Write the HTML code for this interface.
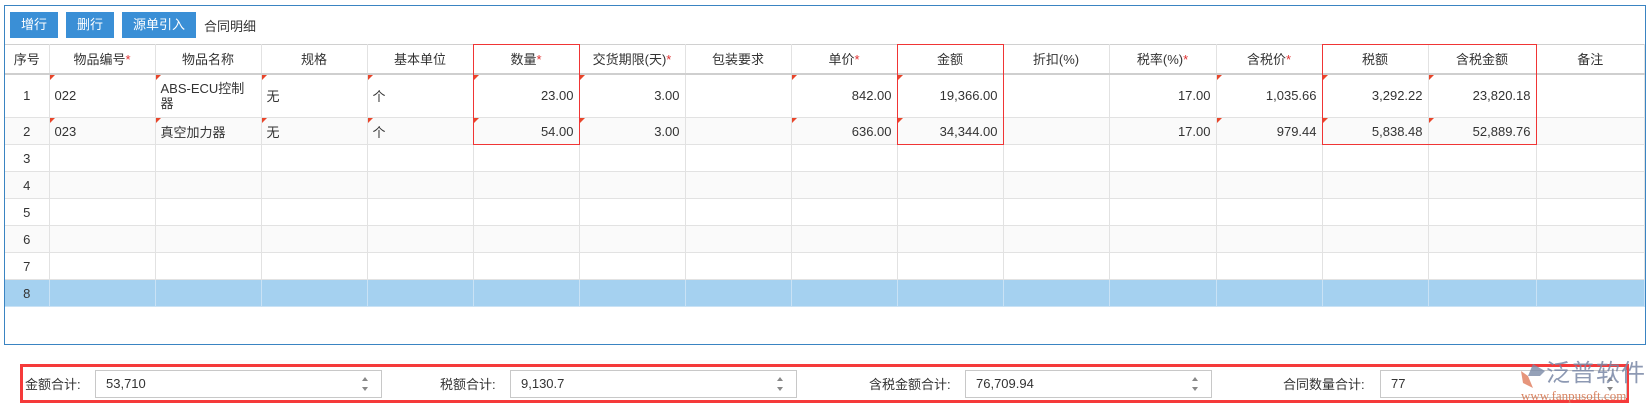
<!DOCTYPE html>
<html><head><meta charset="utf-8"><style>
*{margin:0;padding:0;box-sizing:border-box}
body{width:1649px;height:406px;background:#fff;font-family:"Liberation Sans","Noto Sans CJK SC",sans-serif;font-size:13px;color:#333;position:relative;overflow:hidden}
.panel{position:absolute;left:4px;top:5px;width:1642px;height:340px;border:1px solid #3a84c2}
.btn{position:absolute;top:12px;height:26px;background:#3a8fd6;color:#fff;font-size:13px;line-height:26px;text-align:center}
table{position:absolute;left:5px;top:44px;border-collapse:collapse;table-layout:fixed;width:1640px}
td{border:1px solid #e2e2e2;height:27px;padding:0 5px;white-space:nowrap;position:relative;overflow:visible}
tr.h td{border-top:1px solid #d0d0d0;border-bottom:2px solid #cfcfcf;text-align:center;height:29px}
td:first-child{text-align:center;border-left:none}
td.r{text-align:right}
tr.alt td{background:#fafafa}
tr.sel td{background:#a5d1f0;border-color:#c9e2f5}
.s{color:#e03030}
.t:before{content:"";position:absolute;left:0;top:0;border-top:5px solid #e8452a;border-right:5px solid transparent}
.rb{position:absolute;border:1px solid #f03535}
.foot{position:absolute;left:20px;top:364px;width:1609px;height:39px;border:3px solid #f53a3a}
.lab{position:absolute;top:374px;font-size:13px}
.inp{position:absolute;top:370px;height:28px;border:1px solid #c8c8c8;background:#fff;padding-left:10px;line-height:26px;font-size:13px}
.sp{position:absolute;right:12px;top:6px;width:7px;height:14px}
.sp:before{content:"";position:absolute;top:0;left:0;border-bottom:4px solid #888;border-left:3.5px solid transparent;border-right:3.5px solid transparent}
.sp:after{content:"";position:absolute;bottom:0;left:0;border-top:4px solid #888;border-left:3.5px solid transparent;border-right:3.5px solid transparent}
</style></head><body>
<div class="panel"></div>
<div class="btn" style="left:10px;width:48px">增行</div>
<div class="btn" style="left:66px;width:48px">删行</div>
<div class="btn" style="left:122px;width:74px">源单引入</div>
<div style="position:absolute;left:204px;top:16px">合同明细</div>
<table>
<colgroup><col style="width:44px"><col style="width:106px"><col style="width:106px"><col style="width:106px"><col style="width:106px"><col style="width:106px"><col style="width:106px"><col style="width:106px"><col style="width:106px"><col style="width:106px"><col style="width:106px"><col style="width:107px"><col style="width:106px"><col style="width:106px"><col style="width:108px"><col></colgroup>
<tr class="h"><td>序号</td><td>物品编号<span class="s">*</span></td><td>物品名称</td><td>规格</td><td>基本单位</td><td>数量<span class="s">*</span></td><td>交货期限(天)<span class="s">*</span></td><td>包装要求</td><td>单价<span class="s">*</span></td><td>金额</td><td>折扣(%)</td><td>税率(%)<span class="s">*</span></td><td>含税价<span class="s">*</span></td><td>税额</td><td>含税金额</td><td>备注</td></tr>
<tr><td style="height:44px">1</td><td class="t">022</td><td class="t" style="white-space:normal;line-height:15px">ABS-ECU控制器</td><td class="t">无</td><td class="t">个</td><td class="t r">23.00</td><td class="t r">3.00</td><td></td><td class="t r">842.00</td><td class="t r">19,366.00</td><td></td><td class="r">17.00</td><td class="t r">1,035.66</td><td class="t r">3,292.22</td><td class="t r">23,820.18</td><td></td></tr>
<tr class="alt"><td>2</td><td class="t">023</td><td class="t">真空加力器</td><td class="t">无</td><td class="t">个</td><td class="t r">54.00</td><td class="t r">3.00</td><td></td><td class="t r">636.00</td><td class="t r">34,344.00</td><td></td><td class="r">17.00</td><td class="t r">979.44</td><td class="t r">5,838.48</td><td class="t r">52,889.76</td><td></td></tr>
<tr><td>3</td><td></td><td></td><td></td><td></td><td></td><td></td><td></td><td></td><td></td><td></td><td></td><td></td><td></td><td></td><td></td></tr>
<tr class="alt"><td>4</td><td></td><td></td><td></td><td></td><td></td><td></td><td></td><td></td><td></td><td></td><td></td><td></td><td></td><td></td><td></td></tr>
<tr><td>5</td><td></td><td></td><td></td><td></td><td></td><td></td><td></td><td></td><td></td><td></td><td></td><td></td><td></td><td></td><td></td></tr>
<tr class="alt"><td>6</td><td></td><td></td><td></td><td></td><td></td><td></td><td></td><td></td><td></td><td></td><td></td><td></td><td></td><td></td><td></td></tr>
<tr><td>7</td><td></td><td></td><td></td><td></td><td></td><td></td><td></td><td></td><td></td><td></td><td></td><td></td><td></td><td></td><td></td></tr>
<tr class="sel"><td>8</td><td></td><td></td><td></td><td></td><td></td><td></td><td></td><td></td><td></td><td></td><td></td><td></td><td></td><td></td><td></td></tr>
</table>
<div class="rb" style="left:473px;top:44px;width:107px;height:101px"></div>
<div class="rb" style="left:897px;top:44px;width:107px;height:101px"></div>
<div class="rb" style="left:1322px;top:44px;width:215px;height:101px"></div>
<div class="foot"></div>
<div class="lab" style="left:25px">金额合计:</div>
<div class="inp" style="left:95px;width:287px">53,710<span class="sp"></span></div>
<div class="lab" style="left:440px">税额合计:</div>
<div class="inp" style="left:510px;width:287px">9,130.7<span class="sp"></span></div>
<div class="lab" style="left:869px">含税金额合计:</div>
<div class="inp" style="left:965px;width:247px">76,709.94<span class="sp"></span></div>
<div class="lab" style="left:1283px">合同数量合计:</div>
<div class="inp" style="left:1380px;width:247px">77<span class="sp"></span></div>
<svg style="position:absolute;left:1520px;top:363px" width="26" height="26" viewBox="0 0 26 26"><path d="M13 1 L25 8 L20 13 L8 13 Z" fill="#7a8aa6" opacity=".8"/><path d="M1 8 L8 13 L13 25 L3 20 Z" fill="#e07a5a" opacity=".8"/></svg>
<div style="position:absolute;left:1546px;top:361px;font-size:24px;color:#7a88a6;opacity:.85;letter-spacing:1px;line-height:26px">泛普软件</div>
<div style="position:absolute;left:1521px;top:389px;font-family:'Liberation Serif',serif;font-size:13px;color:#d9825f;line-height:13px">www.fanpusoft.com</div>
</body></html>
